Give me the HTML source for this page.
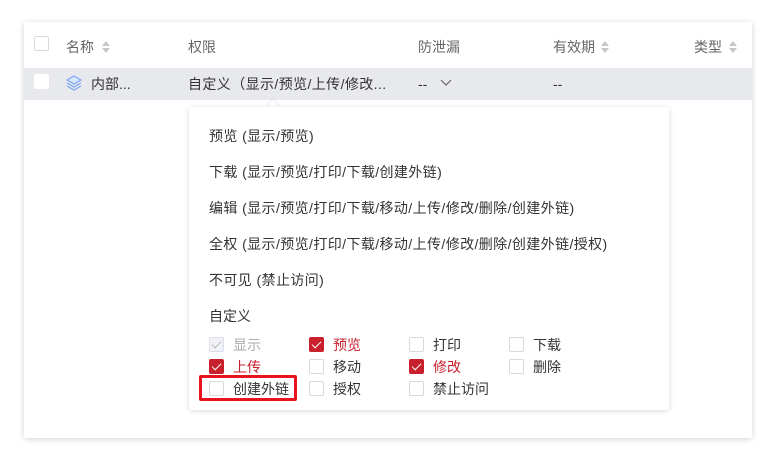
<!DOCTYPE html>
<html><head><meta charset="utf-8"><style>
*{box-sizing:border-box;margin:0;padding:0}
body{width:776px;height:462px;background:#fff;font-family:"Liberation Sans","Noto Sans CJK SC",sans-serif;font-size:14px;line-height:20px;color:#333;position:relative;overflow:hidden}
.card{position:absolute;left:24px;top:22px;width:728px;height:416px;background:#fff;box-shadow:0 1px 6px rgba(0,0,0,.18)}
.a{position:absolute;white-space:nowrap}
.m{letter-spacing:0.4px}
.hd{color:#666}
.cb{position:absolute;width:15px;height:15px;border:1px solid #d9d9d9;background:#fff;border-radius:2px}
.cb.on{background:#c8202d;border-color:#c8202d}
.cb.on::after{content:"";position:absolute;left:4px;top:1px;width:4px;height:8px;border:solid #fff;border-width:0 1.5px 1.5px 0;transform:rotate(45deg)}
.cb.dis{background:#f0f2f5;border-color:#dde}
.cb.dis::after{content:"";position:absolute;left:4px;top:1px;width:4px;height:8px;border:solid #bbb;border-width:0 1.5px 1.5px 0;transform:rotate(45deg)}
.sort{position:absolute;width:8px;height:12px}
.sort::before{content:"";position:absolute;left:0;top:0;border:4px solid transparent;border-bottom:5px solid #c4c7cc;border-top:0}
.sort::after{content:"";position:absolute;left:0;top:7px;border:4px solid transparent;border-top:5px solid #c4c7cc;border-bottom:0}
.dd{position:absolute;left:189px;top:107px;width:480px;height:303px;background:#fff;box-shadow:0 1px 6px rgba(0,0,0,.15);border-radius:3px}
.red{color:#c8202d}.gr{color:#aaa}
</style></head><body>
<div class="card"></div>
<div class="cb" style="left:34px;top:36px"></div>
<div class="a hd" style="left:66px;top:37px">名称</div><div class="sort" style="left:102px;top:41px"></div>
<div class="a hd" style="left:188px;top:37px">权限</div>
<div class="a hd" style="left:418px;top:37px">防泄漏</div>
<div class="a hd" style="left:553px;top:37px">有效期</div><div class="sort" style="left:601px;top:41px"></div>
<div class="a hd" style="left:694px;top:37px">类型</div><div class="sort" style="left:729px;top:41px"></div>
<div class="a" style="left:24px;top:68px;width:728px;height:32px;background:#e8e9ed"></div>
<div class="cb" style="left:34px;top:74px;border-color:#fff"></div>
<svg class="a" style="left:65px;top:75px" width="18" height="16" viewBox="0 0 18 16"><g fill="#dbe6ff" stroke="#7ea6f2" stroke-width="1.2"><path d="M9 1L16 5 9 9 2 5z"/><path d="M2 8l7 4 7-4" fill="none"/><path d="M2 11l7 4 7-4" fill="none"/></g></svg>
<div class="a" style="left:91px;top:74px">内部...</div>
<div class="a m" style="left:188px;top:74px">自定义（显示/预览/上传/修改...</div>
<div class="a" style="left:418px;top:74px">--</div>
<svg class="a" style="left:440px;top:79px" width="12" height="8"><path d="M1 1l5 5 5-5" fill="none" stroke="#666" stroke-width="1.2"/></svg>
<div class="a" style="left:553px;top:74px">--</div>
<div class="a" style="left:268px;top:102px;width:10px;height:10px;background:#fff;transform:rotate(45deg);box-shadow:-1px -1px 2px rgba(0,0,0,.08)"></div>
<div class="dd"></div>
<div class="a m" style="left:209px;top:126px">预览 (显示/预览)</div>
<div class="a m" style="left:209px;top:162px">下载 (显示/预览/打印/下载/创建外链)</div>
<div class="a m" style="left:209px;top:198px">编辑 (显示/预览/打印/下载/移动/上传/修改/删除/创建外链)</div>
<div class="a m" style="left:209px;top:234px">全权 (显示/预览/打印/下载/移动/上传/修改/删除/创建外链/授权)</div>
<div class="a m" style="left:209px;top:270px">不可见 (禁止访问)</div>
<div class="a" style="left:209px;top:306px">自定义</div>
<div class="cb dis" style="left:209px;top:337px"></div><div class="a gr" style="left:233px;top:335px">显示</div>
<div class="cb on" style="left:309px;top:337px"></div><div class="a red" style="left:333px;top:335px">预览</div>
<div class="cb" style="left:409px;top:337px"></div><div class="a" style="left:433px;top:335px">打印</div>
<div class="cb" style="left:509px;top:337px"></div><div class="a" style="left:533px;top:335px">下载</div>
<div class="cb on" style="left:209px;top:359px"></div><div class="a red" style="left:233px;top:357px">上传</div>
<div class="cb" style="left:309px;top:359px"></div><div class="a" style="left:333px;top:357px">移动</div>
<div class="cb on" style="left:409px;top:359px"></div><div class="a red" style="left:433px;top:357px">修改</div>
<div class="cb" style="left:509px;top:359px"></div><div class="a" style="left:533px;top:357px">删除</div>
<div class="cb" style="left:209px;top:381px"></div><div class="a" style="left:233px;top:379px">创建外链</div>
<div class="cb" style="left:309px;top:381px"></div><div class="a" style="left:333px;top:379px">授权</div>
<div class="cb" style="left:409px;top:381px"></div><div class="a" style="left:433px;top:379px">禁止访问</div>
<div class="a" style="left:199px;top:375px;width:98px;height:26px;border:3px solid #e8141c;border-radius:2px"></div>
</body></html>
